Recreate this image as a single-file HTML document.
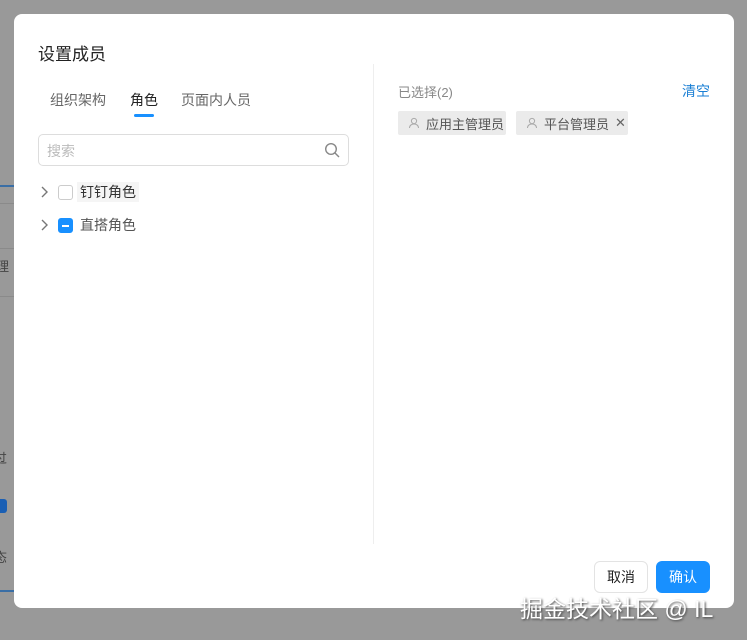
<!DOCTYPE html>
<html><head><meta charset="utf-8"><style>
*{box-sizing:border-box;margin:0;padding:0}
body{width:747px;height:640px;background:#999;position:relative;overflow:hidden;font-family:"Liberation Sans","Noto Sans CJK SC",sans-serif;color:#333}
.bgl{position:absolute;left:0;height:1px;width:14px;background:#8a8a8a}
.modal{position:absolute;left:14px;top:14px;width:720px;height:594px;background:#fff;border-radius:8px}
.title{position:absolute;left:24px;top:26px;font-size:17px;color:#222}
.tabs{position:absolute;left:36px;top:76px;font-size:14px;color:#666}
.tabs span{position:absolute;white-space:nowrap}
.ul{position:absolute;left:120px;top:100px;width:20px;height:3px;border-radius:2px;background:#1890ff}
.search{position:absolute;left:24px;top:120px;width:311px;height:32px;border:1px solid #ddd;border-radius:5px;font-size:14px;color:#bbb;padding:6px 8px}
.row{position:absolute;left:26px;font-size:14px;color:#333;display:flex;align-items:center}
.cb{width:15px;height:15px;border:1px solid #ccc;border-radius:3px;margin:0 4px 0 8px;position:relative}
.cb.ind{background:#1890ff;border-color:#1890ff}
.cb.ind:after{content:"";position:absolute;left:3px;top:6px;width:7px;height:2px;background:#fff}
.divider{position:absolute;left:359px;top:50px;width:1px;height:480px;background:#eee}
.sel{position:absolute;left:384px;top:68px;font-size:13px;color:#888}
.clear{position:absolute;left:668px;top:67px;font-size:14px;color:#1a7fd4}
.tag{position:absolute;top:97px;height:24px;background:#ebebeb;border-radius:2px;font-size:13px;color:#555;padding:0 8px 0 10px;white-space:nowrap;display:flex;align-items:center;gap:6px}
.tag svg{flex-shrink:0;width:12px;height:12px}
.btn{position:absolute;top:547px;height:32px;border-radius:6px;font-size:14px;text-align:center;line-height:30px}
.wm{position:absolute;left:520px;top:590px;font-size:23px;color:#fff;text-shadow:1px 1px 2px #444;white-space:nowrap}
</style></head><body>
<div class="bgl" style="top:185px;height:2px;background:#3a6ea5"></div>
<div class="bgl" style="top:203px"></div>
<div class="bgl" style="top:248px"></div>
<div class="bgl" style="top:296px"></div>
<div class="bgl" style="top:590px;height:2px;background:#3a6ea5"></div>
<div style="position:absolute;left:-4px;top:256px;font-size:13px;color:#444">理</div>
<div style="position:absolute;left:-6px;top:448px;font-size:13px;color:#444">过</div>
<div style="position:absolute;left:-6px;top:547px;font-size:13px;color:#444">态</div>
<div style="position:absolute;left:-5px;top:499px;width:12px;height:14px;background:#1a5fb4;border-radius:3px"></div>
<div class="modal">
<div class="title">设置成员</div>
<div class="tabs"><span style="left:0">组织架构</span><span style="left:80px;color:#222">角色</span><span style="left:131px">页面内人员</span></div>
<div class="ul"></div>
<div class="search">搜索
<svg style="position:absolute;right:8px;top:7px" width="16" height="16" viewBox="0 0 16 16" fill="none" stroke="#888" stroke-width="1.4"><circle cx="7" cy="7" r="5.3"/><path d="M11 11l4 4"/></svg></div>
<div class="row" style="top:168px"><svg width="10" height="12" viewBox="0 0 10 12"><path d="M2 1l5 5-5 5" stroke="#777" stroke-width="1.4" fill="none"/></svg><span class="cb"></span><span style="background:#f5f5f5;padding:0 3px">钉钉角色</span></div>
<div class="row" style="top:201px"><svg width="10" height="12" viewBox="0 0 10 12"><path d="M2 1l5 5-5 5" stroke="#777" stroke-width="1.4" fill="none"/></svg><span class="cb ind"></span><span style="color:#555;padding-left:3px">直搭角色</span></div>
<div class="divider"></div>
<div class="sel">已选择(2)</div>
<div class="clear">清空</div>
<div class="tag" style="left:384px;width:108px"><svg viewBox="0 0 12 12" fill="none" stroke="#aaa" stroke-width="1"><circle cx="6" cy="4" r="2.6"/><path d="M1.5 11c0-2.5 2-4 4.5-4s4.5 1.5 4.5 4"/></svg>应用主管理员</div>
<div class="tag" style="left:502px;width:112px"><svg viewBox="0 0 12 12" fill="none" stroke="#aaa" stroke-width="1"><circle cx="6" cy="4" r="2.6"/><path d="M1.5 11c0-2.5 2-4 4.5-4s4.5 1.5 4.5 4"/></svg>平台管理员<span style="color:#666">✕</span></div>
<div class="btn" style="left:580px;width:54px;border:1px solid #e3e3e3;color:#222">取消</div>
<div class="btn" style="left:642px;width:54px;background:#1890ff;color:#fff;line-height:32px">确认</div>
</div>
<div class="wm">掘金技术社区 @ IL</div>
</body></html>
